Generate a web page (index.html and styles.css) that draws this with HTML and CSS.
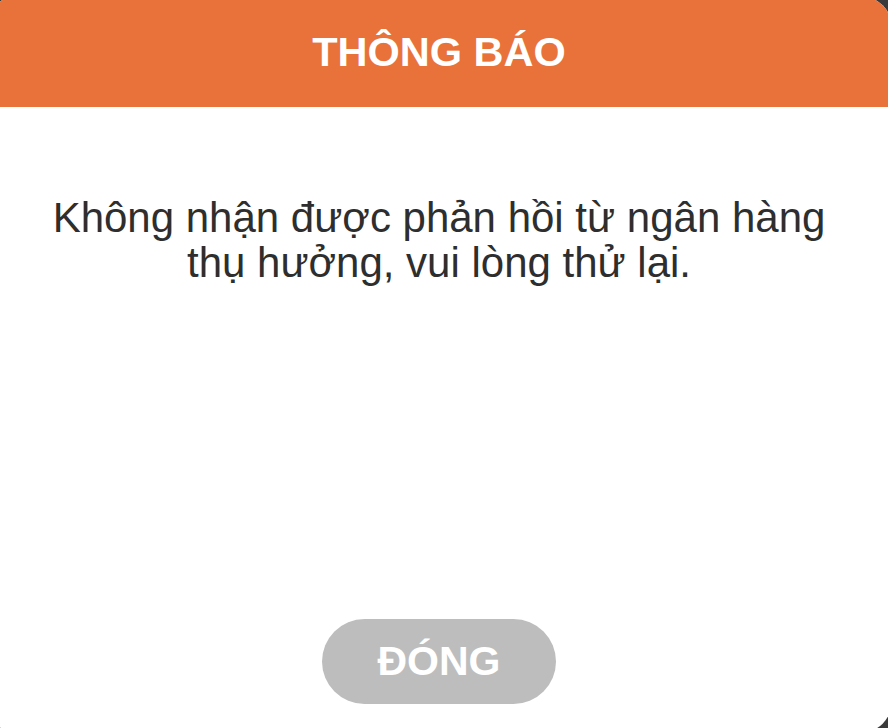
FILE: index.html
```html
<!DOCTYPE html>
<html lang="vi">
<head>
<meta charset="utf-8">
<title>Thông báo</title>
<link rel="stylesheet" href="styles.css">
</head>
<body>
<div class="dialog">
  <div class="dialog-header">THÔNG BÁO</div>
  <div class="dialog-body">
    <p class="message">Không nhận được phản hồi từ ngân hàng<br>thụ hưởng, vui lòng thử lại.</p>
  </div>
  <div class="dialog-footer">
    <button class="close-btn" type="button">ĐÓNG</button>
  </div>
</div>
</body>
</html>
```

FILE: styles.css
```css
html, body {
  margin: 0;
  padding: 0;
  width: 888px;
  height: 728px;
  overflow: hidden;
  background: #3a3a3a;
}

.dialog {
  margin: -4px 0 0 -14px;
  width: 906px;
  height: 737px;
  border-radius: 32px;
  background: #ffffff;
  overflow: hidden;
  display: flex;
  flex-direction: column;
  font-family: "Liberation Sans", Arial, sans-serif;
}

.dialog-header {
  height: 111px;
  padding-top: 0;
  box-sizing: border-box;
  background: #e8723a;
  color: #ffffff;
  font-weight: 700;
  font-size: 41.5px;
  display: flex;
  align-items: center;
  justify-content: center;
}

.dialog-body {
  flex: 1;
  padding-top: 88px;
  text-align: center;
}

.message {
  margin: 0;
  font-size: 42px;
  line-height: 45px;
  color: #2e2e2e;
}

.dialog-footer {
  display: flex;
  justify-content: center;
  padding-bottom: 29px;
}

.close-btn {
  width: 234px;
  height: 85px;
  border: none;
  border-radius: 43px;
  background: #bdbdbd;
  color: #ffffff;
  font-family: "Liberation Sans", Arial, sans-serif;
  font-weight: 700;
  font-size: 41px;
  padding: 0;
}
```
